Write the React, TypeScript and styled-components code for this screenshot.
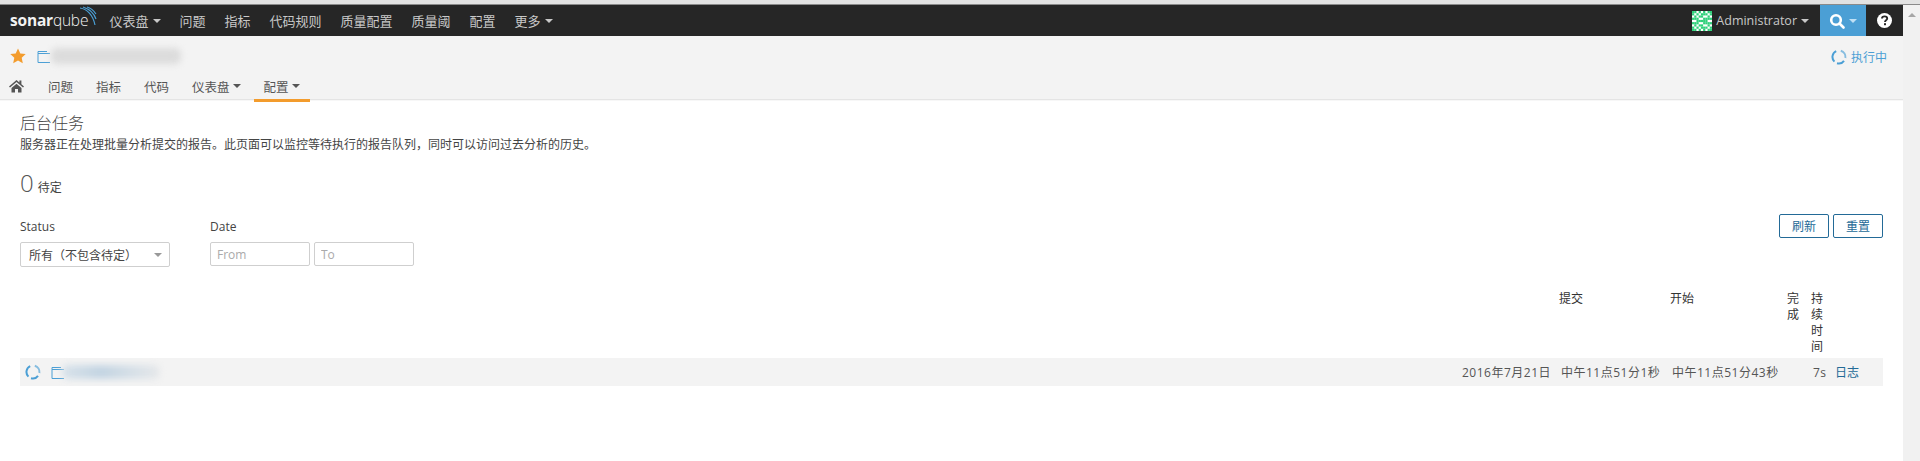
import React from 'react';
import styled, { createGlobalStyle } from 'styled-components';

const GlobalStyle = createGlobalStyle`
  html, body {
    margin: 0;
    padding: 0;
    background: #fff;
    overflow: hidden;
  }
  body {
    font-family: "Open Sans", "Noto Sans CJK SC", sans-serif;
    font-size: 12px;
    color: #444;
  }
`;

const Page = styled.div`
  display: flex;
  flex-direction: column;
  width: 1920px;
  height: 461px;
`;

const TopStrip = styled.div`
  height: 5px;
  background: #e2e2e2;
  border-bottom: 1px solid #8a8a8a;
  box-sizing: border-box;
  flex: none;
`;

const Body = styled.div`
  display: flex;
  flex: 1;
  min-height: 0;
`;

const Main = styled.div`
  flex: 1;
  min-width: 0;
`;

const ScrollTrack = styled.div`
  width: 17px;
  flex: none;
  background: #f1f1f1;
  display: flex;
  flex-direction: column;
  align-items: center;
  padding: 8px 0;
  box-sizing: border-box;
`;

const Navbar = styled.nav`
  height: 31px;
  background: #262626;
  display: flex;
  align-items: stretch;
  color: #c8c8c8;
  font-size: 13px;
`;

const Logo = styled.div`
  position: relative;
  width: 84px;
  margin-left: 10px;
  margin-right: 6px;
  font-size: 15.5px;
  line-height: 31px;
  color: #f2f2f2;
  letter-spacing: -0.2px;
  b {
    font-weight: 700;
  }
  span {
    font-weight: 300;
  }
  svg {
    position: absolute;
    left: 64px;
    top: 1px;
  }
`;

const NavItem = styled.a`
  display: flex;
  align-items: center;
  gap: 4px;
  padding: 0 9.5px;
`;

const Caret = styled.i<{ $color?: string }>`
  display: inline-block;
  width: 0;
  height: 0;
  border-left: 4px solid transparent;
  border-right: 4px solid transparent;
  border-top: 4px solid ${(p) => p.$color || 'currentColor'};
`;

const UpCaret = styled(Caret)`
  transform: rotate(180deg);
`;

const NavRight = styled.div`
  margin-left: auto;
  display: flex;
  align-items: stretch;
`;

const UserItem = styled.a`
  display: flex;
  align-items: center;
  gap: 4px;
  font-size: 12.5px;
  padding-right: 11px;
`;

const SearchButton = styled.a`
  width: 46px;
  background: #4b9fd5;
  display: flex;
  align-items: center;
  justify-content: center;
  gap: 4px;
  color: #fff;
`;

const HelpItem = styled.a`
  width: 37px;
  display: flex;
  align-items: center;
  justify-content: center;
`;

const ContextBar = styled.div`
  height: 63px;
  background: #f3f3f3;
  border-bottom: 1px solid #e4e4e4;
  box-shadow: 0 1px 0 #f7f7f7;
`;

const ContextTop = styled.div`
  height: 40px;
  display: flex;
  align-items: center;
  padding: 0 16px 0 10px;
`;

const StarGap = styled.span`
  width: 11px;
`;

const Blur = styled.div<{ $w: number; $h: number; $c: string; $shift?: number }>`
  width: ${(p) => p.$w}px;
  height: ${(p) => p.$h}px;
  margin-left: ${(p) => p.$shift || 0}px;
  background: ${(p) => p.$c};
  filter: blur(3px);
  border-radius: 6px;
`;

const Running = styled.div`
  margin-left: auto;
  padding-top: 2px;
  display: flex;
  align-items: center;
  gap: 4px;
  color: #4b9fd5;
  font-size: 12px;
`;

const Tabs = styled.div`
  display: flex;
  height: 23px;
  padding-left: 9px;
  color: #555;
  font-size: 12.5px;
`;

const Tab = styled.a<{ $active?: boolean; $icon?: boolean }>`
  display: flex;
  align-items: center;
  gap: 3px;
  padding: 0 ${(p) => (p.$icon ? 0 : 10)}px 3px;
  margin-right: ${(p) => (p.$icon ? 14 : 3)}px;
  height: 26px;
  box-sizing: border-box;
  border-bottom: 3px solid ${(p) => (p.$active ? '#f39c2d' : 'transparent')};
`;

const Content = styled.div`
  padding: 11px 20px 0 20px;
`;

const Title = styled.h1`
  margin: 0;
  font-size: 16px;
  line-height: 24px;
  font-weight: 300;
  color: #444;
`;

const Description = styled.p`
  margin: 2px 0 0;
  font-size: 12px;
  line-height: 16px;
  color: #444;
`;

const Pending = styled.div`
  margin-top: 14px;
  height: 32px;
  display: flex;
  align-items: baseline;
  gap: 4px;
`;

const PendingCount = styled.span`
  font-size: 24px;
  line-height: 32px;
  font-weight: 300;
  color: #555;
`;

const Filters = styled.div`
  margin-top: 20px;
  display: flex;
  align-items: flex-start;
  height: 49px;
`;

const FilterGroup = styled.div<{ $w: number }>`
  width: ${(p) => p.$w}px;
`;

const FilterLabel = styled.label`
  display: block;
  font-size: 12px;
  line-height: 16px;
  margin-bottom: 7px;
  color: #444;
`;

const SelectBox = styled.div`
  width: 150px;
  height: 25px;
  border: 1px solid #cfcfcf;
  border-radius: 2px;
  box-sizing: border-box;
  display: flex;
  align-items: center;
  justify-content: space-between;
  padding: 0 7px 0 8px;
  color: #444;
  font-size: 12px;
`;

const DateRow = styled.div`
  display: flex;
  gap: 4px;
`;

const DateInput = styled.input`
  width: 100px;
  height: 24px;
  box-sizing: border-box;
  border: 1px solid #cfcfcf;
  border-radius: 2px;
  padding: 0 6px;
  font: inherit;
  font-size: 12px;
  &::placeholder {
    color: #aaa;
  }
`;

const Actions = styled.div`
  margin-left: auto;
  margin-top: -5px;
  display: flex;
  gap: 4px;
`;

const ActionButton = styled.button`
  width: 50px;
  height: 24px;
  background: #fff;
  border: 1px solid #236a97;
  border-radius: 2px;
  color: #236a97;
  font: inherit;
  font-size: 12px;
  padding: 0;
`;

const Table = styled.table`
  width: 100%;
  margin-top: 23px;
  border-collapse: collapse;
  table-layout: fixed;
  font-size: 12px;
`;

const Th = styled.th<{ $w?: number }>`
  ${(p) => (p.$w ? `width: ${p.$w}px;` : '')}
  box-sizing: border-box;
  font-weight: 400;
  color: #333;
  text-align: left;
  vertical-align: top;
  padding: 0 4px 3px 3px;
  line-height: 16px;
  word-break: break-all;
`;

const Td = styled.td<{ $align?: string }>`
  height: 28px;
  padding: 0 5px;
  background: #f3f3f3;
  text-align: ${(p) => p.$align || 'left'};
  white-space: nowrap;
  color: #555;
  letter-spacing: 0.5px;
`;

const ProjectCell = styled.div`
  display: flex;
  align-items: center;
  gap: 3px;
`;

const RowIconGap = styled.span`
  width: 4px;
`;

const LogLink = styled.a`
  color: #236a97;
  letter-spacing: 0;
`;

const Spinner = ({ size, color }: { size: number; color: string }) => (
  <svg width={size} height={size} viewBox="0 0 16 16" fill="none" stroke={color} strokeWidth="2">
    <path d="M5.2 2.1A6.5 6.5 0 0 0 3.4 12.6" />
    <path d="M6 14.2a6.5 6.5 0 0 0 7-2.4" />
    <path d="M14.4 9a6.5 6.5 0 0 0-4.6-7.2" strokeOpacity="0.65" />
  </svg>
);

const FolderIcon = () => (
  <svg width="14" height="13" viewBox="0 0 14 13" fill="none" stroke="#4b9fd5" strokeWidth="1">
    <path d="M1 12.5V3.5h12M1 3.5V1.5h9M1 12.5h12" />
  </svg>
);

// identicon of the user, a 9x9 green and white grid
const avatarCells = [
  '110101011',
  '101011101',
  '010110010',
  '111001111',
  '001111100',
  '111001111',
  '010110010',
  '101011101',
  '110101011',
];

const Avatar = () => (
  <svg width="20" height="20" viewBox="0 0 18 18">
    <rect width="18" height="18" fill="#fff" />
    {avatarCells.map((row, y) =>
      row.split('').map((c, x) =>
        c === '1' ? <rect key={`${x}-${y}`} x={x * 2} y={y * 2} width="2" height="2" fill="#2fd07a" /> : null,
      ),
    )}
  </svg>
);

const navItems: [string, boolean][] = [
  ['仪表盘', true],
  ['问题', false],
  ['指标', false],
  ['代码规则', false],
  ['质量配置', false],
  ['质量阈', false],
  ['配置', false],
  ['更多', true],
];

const App: React.FC = () => (
  <>
    <GlobalStyle />
    <Page>
      <TopStrip />
      <Body>
        <Main>
          <Navbar>
            <Logo>
              <b>sonar</b>
              <span>qube</span>
              <svg width="28" height="28" viewBox="0 0 28 28" fill="none" stroke="#4b9fd5" strokeWidth="1.2">
                <path d="M6 2c7 1 13 7 15 17" />
                <path d="M9 1c6 2 11 6 13 12" />
                <path d="M13 1c4 1 7 4 9 7" />
              </svg>
            </Logo>
            {navItems.map(([label, caret]) => (
              <NavItem key={label}>
                {label}
                {caret && <Caret />}
              </NavItem>
            ))}
            <NavRight>
              <UserItem>
                <Avatar />
                Administrator
                <Caret />
              </UserItem>
              <SearchButton>
                <svg width="16" height="16" viewBox="0 0 16 16" fill="none" stroke="#fff" strokeWidth="2.6">
                  <circle cx="7" cy="7" r="4.8" />
                  <path d="M10.5 10.5L14.5 14.5" strokeLinecap="round" />
                </svg>
                <Caret $color="#bfe0f5" />
              </SearchButton>
              <HelpItem>
                <svg width="15" height="15" viewBox="0 0 15 15">
                  <circle cx="7.5" cy="7.5" r="7.5" fill="#fff" />
                  <path d="M5 5.6c0-3 5.2-3 5.2 0 0 1.8-2.2 1.7-2.2 3.4" fill="none" stroke="#262626" strokeWidth="1.9" />
                  <rect x="7" y="10.2" width="2" height="2" fill="#262626" />
                </svg>
              </HelpItem>
            </NavRight>
          </Navbar>
          <ContextBar>
            <ContextTop>
              <svg width="16" height="16" viewBox="0 0 16 16">
                <path d="M8 .5l2.3 5 5.4.6-4 3.7 1.1 5.4L8 12.5l-4.8 2.7 1.1-5.4-4-3.7 5.4-.6z" fill="#f39c2d" />
              </svg>
              <StarGap />
              <FolderIcon />
              <Blur $w={130} $h={16} $c="#dcdcdc" />
              <Running>
                <Spinner size={16} color="#4b9fd5" />
                执行中
              </Running>
            </ContextTop>
            <Tabs>
              <Tab $icon>
                <svg width="15" height="14" viewBox="0 0 15 14" fill="#555">
                  <path d="M7.5 1L0 7.4l1 1.1 6.5-5.6L14 8.5l1-1.1-2.6-2.2V1.5h-2v2z" />
                  <path d="M2.5 9l5-4.2 5 4.2v4.5H9V10H6v3.5H2.5z" />
                </svg>
              </Tab>
              <Tab>问题</Tab>
              <Tab>指标</Tab>
              <Tab>代码</Tab>
              <Tab>
                仪表盘
                <Caret />
              </Tab>
              <Tab $active>
                配置
                <Caret />
              </Tab>
            </Tabs>
          </ContextBar>
          <Content>
            <Title>后台任务</Title>
            <Description>
              服务器正在处理批量分析提交的报告。此页面可以监控等待执行的报告队列，同时可以访问过去分析的历史。
            </Description>
            <Pending>
              <PendingCount>0</PendingCount>
              待定
            </Pending>
            <Filters>
              <FilterGroup $w={190}>
                <FilterLabel>Status</FilterLabel>
                <SelectBox>
                  所有（不包含待定）
                  <Caret $color="#999" />
                </SelectBox>
              </FilterGroup>
              <FilterGroup $w={210}>
                <FilterLabel>Date</FilterLabel>
                <DateRow>
                  <DateInput placeholder="From" />
                  <DateInput placeholder="To" />
                </DateRow>
              </FilterGroup>
              <Actions>
                <ActionButton>刷新</ActionButton>
                <ActionButton>重置</ActionButton>
              </Actions>
            </Filters>
            <Table>
              <thead>
                <tr>
                  <Th />
                  <Th $w={100} />
                  <Th $w={111}>提交</Th>
                  <Th $w={117}>开始</Th>
                  <Th $w={24}>完成</Th>
                  <Th $w={22}>持续时间</Th>
                  <Th $w={53} />
                </tr>
              </thead>
              <tbody>
                <tr>
                  <Td>
                    <ProjectCell>
                      <Spinner size={16} color="#4b9fd5" />
                      <RowIconGap />
                      <FolderIcon />
                      <Blur $w={98} $h={14} $c="linear-gradient(90deg, #d8e2ea, #c3d4e2 40%, #d5dfe7 70%, #e6e8ea)" $shift={-6} />
                    </ProjectCell>
                  </Td>
                  <Td $align="right">2016年7月21日</Td>
                  <Td>中午11点51分1秒</Td>
                  <Td>中午11点51分43秒</Td>
                  <Td />
                  <Td>7s</Td>
                  <Td>
                    <LogLink>日志</LogLink>
                  </Td>
                </tr>
              </tbody>
            </Table>
          </Content>
        </Main>
        <ScrollTrack>
          <UpCaret $color="#a6a6a6" />
        </ScrollTrack>
      </Body>
    </Page>
  </>
);

export default App;
